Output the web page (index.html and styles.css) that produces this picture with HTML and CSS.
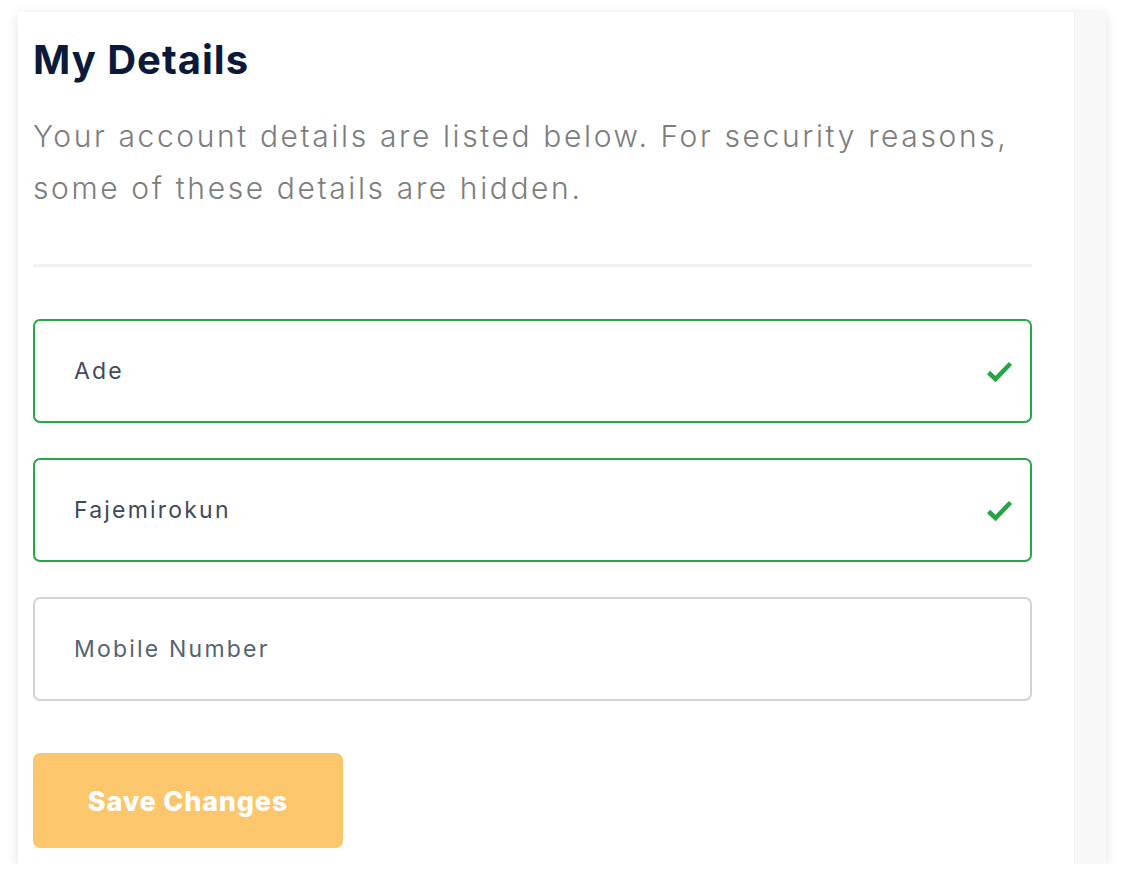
FILE: index.html
```html
<!DOCTYPE html>
<html lang="en">
<head>
<meta charset="utf-8">
<title>My Details</title>
<link rel="stylesheet" href="styles.css">
</head>
<body>
<div class="card">
  <div class="main">
    <h1 class="title">My Details</h1>
    <p class="intro">Your account details are listed below. For security reasons, some of these details are hidden.</p>
    <hr class="divider">
    <form class="form">
      <label class="field field-valid">
        <input class="field-input" type="text" value="Ade">
        <svg class="check" width="27" height="23" viewBox="0 0 27 23"><path d="M2.5 12.5 L9.5 19 L24.5 3.5" fill="none" stroke="#27a444" stroke-width="4.5" stroke-linejoin="miter" stroke-linecap="butt"/></svg>
      </label>
      <label class="field field-valid">
        <input class="field-input" type="text" value="Fajemirokun">
        <svg class="check" width="27" height="23" viewBox="0 0 27 23"><path d="M2.5 12.5 L9.5 19 L24.5 3.5" fill="none" stroke="#27a444" stroke-width="4.5" stroke-linejoin="miter" stroke-linecap="butt"/></svg>
      </label>
      <label class="field">
        <input class="field-input" type="text" placeholder="Mobile Number">
      </label>
      <button class="save" type="button">Save Changes</button>
    </form>
  </div>
  <div class="strip"></div>
</div>
</body>
</html>
```

FILE: styles.css
```css
html, body {
  margin: 0;
  padding: 0;
  background: #ffffff;
}

body {
  font-family: Inter, "Open Sans", sans-serif;
  padding: 12px 0 0 18px;
}

.card {
  display: flex;
  width: 1088px;
  height: 852px;
  background: #ffffff;
  box-shadow: 0 3px 12px rgba(0, 0, 0, 0.12);
}

.main {
  flex: 1;
  padding: 24px 42px 15px 15px;
  display: flex;
  flex-direction: column;
}

.strip {
  width: 31px;
  background: #f8f8f8;
  border-left: 1px solid #efefef;
}

.title {
  margin: 0;
  font-size: 40px;
  line-height: 48px;
  font-weight: 700;
  color: #0b1a3a;
  letter-spacing: 1px;
}

.intro {
  margin: 26px 0 0;
  font-size: 30px;
  line-height: 52px;
  font-weight: 300;
  color: #7d7d7d;
  letter-spacing: 2.62px;
}

.divider {
  margin: 50px 0 0;
  border: none;
  height: 3px;
  background: #f0f0f0;
}

.form {
  margin-top: 52px;
  display: flex;
  flex-direction: column;
  gap: 35px;
}

.field {
  position: relative;
  display: flex;
  align-items: center;
  height: 104px;
  box-sizing: border-box;
  border: 2px solid #cfd3da;
  border-radius: 7px;
  padding: 0 17px 0 39px;
}

.field-valid {
  border-color: #28a745;
}

.field-input {
  flex: 1;
  border: none;
  outline: none;
  background: transparent;
  padding: 0;
  font-family: Inter, "Open Sans", sans-serif;
  font-size: 23px;
  font-weight: 400;
  letter-spacing: 2.2px;
  color: #3f4a5a;
}

.field-input::placeholder {
  color: #566275;
  opacity: 1;
}

.check {
  flex: none;
  display: block;
}

.save {
  margin-top: 17px;
  width: 310px;
  height: 95px;
  border: none;
  border-radius: 7px;
  background: #fcc66c;
  color: #ffffff;
  font-family: Inter, "Open Sans", sans-serif;
  font-size: 27px;
  font-weight: 800;
  letter-spacing: 0.8px;
  padding: 2px 0 0;
}
```
